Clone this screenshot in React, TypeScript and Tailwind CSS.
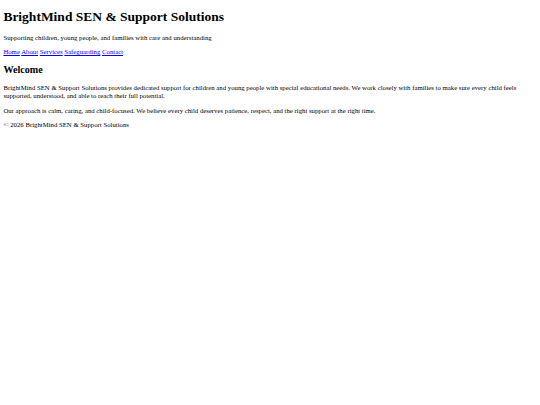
import React from "react";

export default function App() {
  return (
    <div className="min-h-[405px] bg-white px-[3.375px] font-['Liberation_Serif','Times_New_Roman',serif] text-[6.75px] leading-[7.8px] text-black">
      <header>
        <h1 className="my-[9.045px] text-[13.5px] font-bold leading-[15.5px]">
          BrightMind SEN &amp; Support Solutions
        </h1>
        <p className="my-[6.75px]">
          Supporting children, young people, and families with care and understanding
        </p>
        <nav>
          <p className="my-[6.75px]">
            <a href="#" className="text-[#0000ee] underline">Home</a>{" "}
            <a href="#" className="text-[#0000ee] underline">About</a>{" "}
            <a href="#" className="text-[#0000ee] underline">Services</a>{" "}
            <a href="#" className="text-[#0000ee] underline">Safeguarding</a>{" "}
            <a href="#" className="text-[#0000ee] underline">Contact</a>
          </p>
        </nav>
      </header>
      <main>
        <h2 className="my-[8.4px] text-[10.125px] font-bold leading-[11.65px]">Welcome</h2>
        <p className="my-[6.75px]">
          BrightMind SEN &amp; Support Solutions provides dedicated support for children and young people with special educational needs. We work closely with families to make sure every child feels supported, understood, and able to reach their full potential.
        </p>
        <p className="my-[6.75px]">
          Our approach is calm, caring, and child-focused. We believe every child deserves patience, respect, and the right support at the right time.
        </p>
      </main>
      <footer>
        <p className="my-[6.75px]">© 2026 BrightMind SEN &amp; Support Solutions</p>
      </footer>
    </div>
  );
}
